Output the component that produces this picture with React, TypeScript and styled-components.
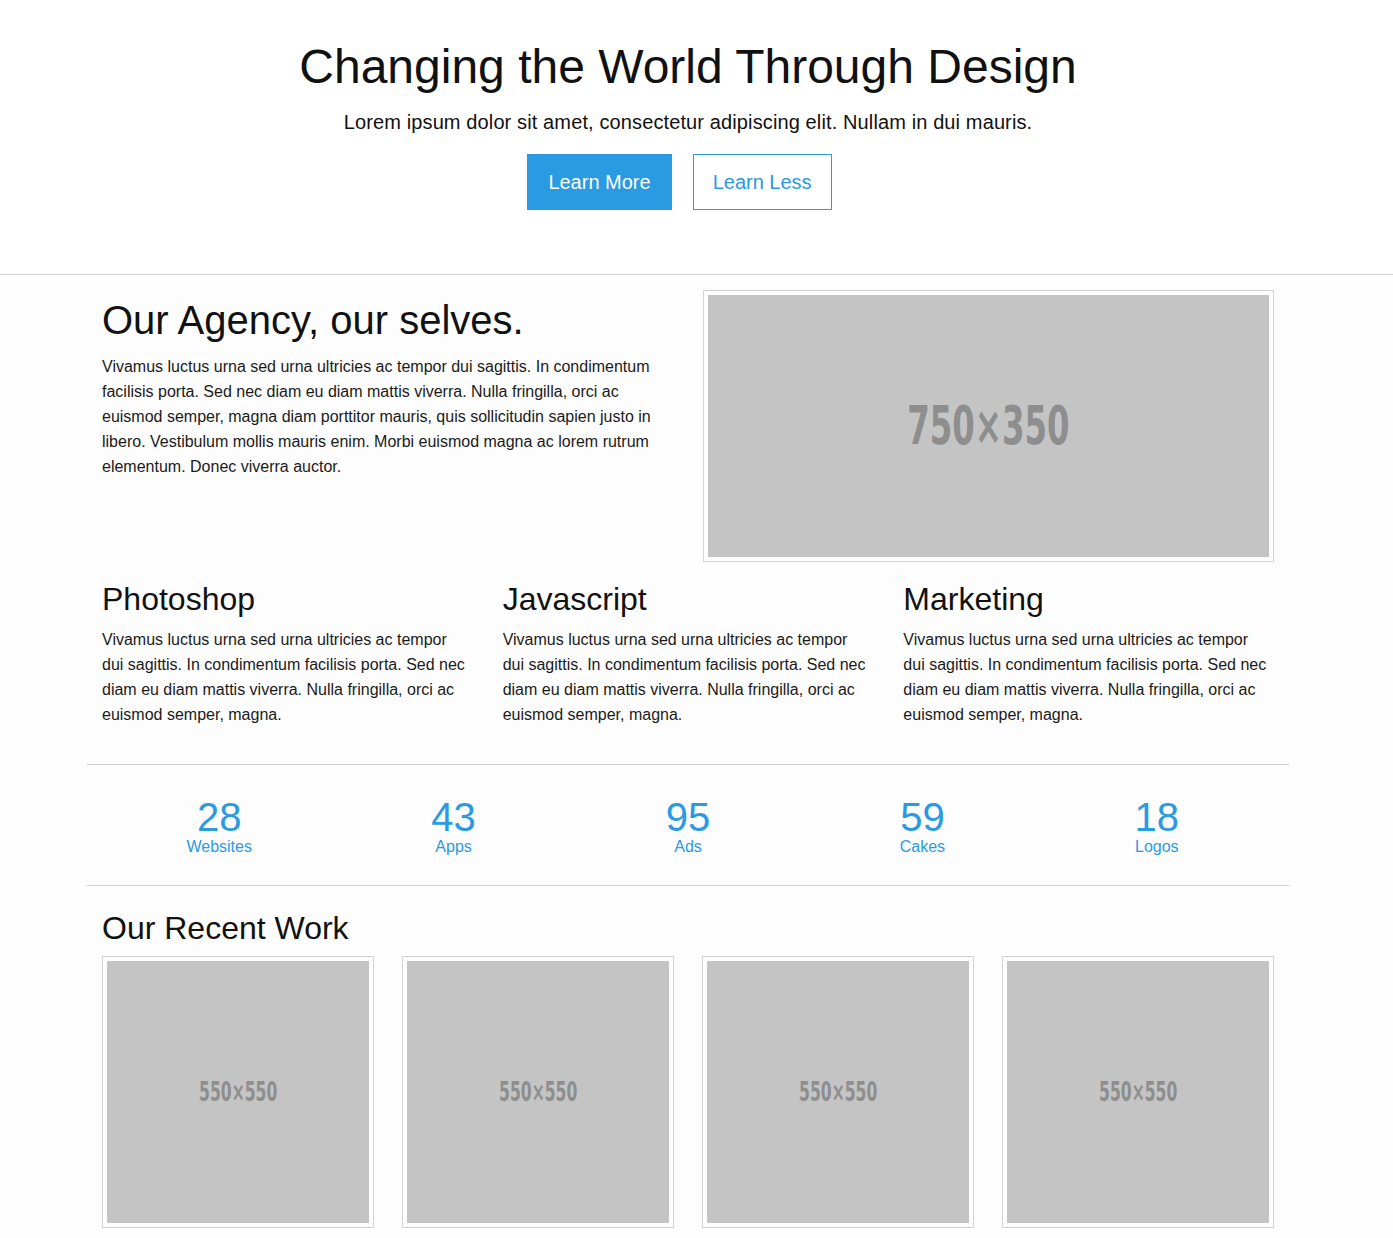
import React from 'react';
import styled, {createGlobalStyle} from 'styled-components';

const GlobalStyle = createGlobalStyle`
    html, body {
        margin: 0;
        padding: 0;
        background: #fdfdfd;
        color: #111;
        font-family: "Liberation Sans", Arial, Helvetica, sans-serif;
    }

    * {
        box-sizing: border-box;
    }
`;

const BLUE = '#2a9ae3';
// the reference was shot with a scrollbar gutter on the right
const GUTTER = 17;

const Hero = styled.header`
    background: #fff;
    border-bottom: 1px solid #cfcfcf;
    padding: 40px ${GUTTER}px 64px 0;
    text-align: center;
`;

const HeroTitle = styled.h1`
    margin: 0;
    font-size: 48px;
    line-height: 53px;
    font-weight: 400;
    color: #111;
`;

const HeroLead = styled.p`
    margin: 17px 0 0;
    font-size: 20px;
    line-height: 24px;
    letter-spacing: 0.12px;
    color: #111;
`;

const ButtonRow = styled.div`
    display: flex;
    justify-content: center;
    gap: 21px;
    margin-top: 20px;
    padding-right: 17px;
`;

const HeroButton = styled.a<{ $outline?: boolean }>`
    display: inline-flex;
    align-items: center;
    justify-content: center;
    height: 56px;
    padding: 0 ${p => (p.$outline ? 19 : 20)}px;
    font-size: 20px;
    text-decoration: none;
    border: 1px solid ${BLUE};
    background: ${p => (p.$outline ? '#fff' : BLUE)};
    color: ${p => (p.$outline ? BLUE : '#fff')};
    cursor: pointer;
`;

const Main = styled.main`
    padding-right: ${GUTTER}px;
`;

const Container = styled.div`
    width: 1202px;
    margin: 0 auto;
`;

const Row = styled.div<{ $cols: number }>`
    display: grid;
    grid-template-columns: repeat(${p => p.$cols}, 1fr);
    padding: 0 15px;
    column-gap: 30px;
`;

const AgencyRow = styled(Row)`
    padding-top: 15px;
`;

const AgencyText = styled.div`
    padding-top: 6px;
`;

const BigHeading = styled.h2`
    margin: 0 0 10px;
    font-size: 40px;
    line-height: 48px;
    font-weight: 400;
`;

const Heading = styled.h3`
    margin: 0 0 9px;
    font-size: 32px;
    line-height: 38px;
    font-weight: 400;
`;

const Body = styled.p`
    margin: 0;
    font-size: 16px;
    line-height: 25px;
    color: #1a1a1a;
`;

const FeatureText = styled(Body)`
    padding-right: 2px;
`;

const Frame = styled.div`
    border: 1px solid #d4d4d4;
    background: #fff;
    padding: 4px;
`;

const Placeholder = styled.div<{ $ratio: string; $size: number; $squeeze: number }>`
    aspect-ratio: ${p => p.$ratio};
    background: #c4c4c4;
    display: flex;
    align-items: center;
    justify-content: center;
    color: #8e8e8e;
    font-family: "DejaVu Sans", "Liberation Sans", sans-serif;
    font-weight: 700;
    font-size: ${p => p.$size}px;
    overflow: hidden;

    span {
        display: inline-block;
        transform: scaleX(${p => p.$squeeze});
    }
`;

const FeatureRow = styled(Row)`
    padding-top: 18px;
    padding-bottom: 37px;
    border-bottom: 1px solid #cfcfcf;
`;

const Stats = styled.section`
    display: grid;
    grid-template-columns: repeat(5, 1fr);
    padding: 32px 15px 28px;
    border-bottom: 1px solid #cfcfcf;
`;

const Stat = styled.div`
    text-align: center;
    color: ${BLUE};
`;

const StatNumber = styled.div`
    font-size: 40px;
    line-height: 40px;
`;

const StatLabel = styled.div`
    font-size: 16px;
    line-height: 20px;
`;

const WorkSection = styled.section`
    padding: 23px 15px 0;
`;

const WorkGrid = styled.div`
    display: grid;
    grid-template-columns: repeat(4, 1fr);
    gap: 28px;
    margin-top: 9px;
`;

const lorem = 'Vivamus luctus urna sed urna ultricies ac tempor dui sagittis. In condimentum facilisis porta. Sed nec diam eu diam mattis viverra. Nulla fringilla, orci ac euismod semper, magna.';

const features = ['Photoshop', 'Javascript', 'Marketing'];

const stats = [
    {n: 28, label: 'Websites'},
    {n: 43, label: 'Apps'},
    {n: 95, label: 'Ads'},
    {n: 59, label: 'Cakes'},
    {n: 18, label: 'Logos'},
];

const App = () => {
    return (
        <>
            <GlobalStyle/>
            <Hero>
                <HeroTitle>Changing the World Through Design</HeroTitle>
                <HeroLead>Lorem ipsum dolor sit amet, consectetur adipiscing elit. Nullam in dui mauris.</HeroLead>
                <ButtonRow>
                    <HeroButton>Learn More</HeroButton>
                    <HeroButton $outline>Learn Less</HeroButton>
                </ButtonRow>
            </Hero>
            <Main>
                <Container>
                    <AgencyRow $cols={2}>
                        <AgencyText>
                            <BigHeading>Our Agency, our selves.</BigHeading>
                            <Body>
                                Vivamus luctus urna sed urna ultricies ac tempor dui sagittis. In condimentum facilisis
                                porta. Sed nec diam eu diam mattis viverra. Nulla fringilla, orci ac euismod semper, magna
                                diam porttitor mauris, quis sollicitudin sapien justo in libero. Vestibulum mollis mauris
                                enim. Morbi euismod magna ac lorem rutrum elementum. Donec viverra auctor.
                            </Body>
                        </AgencyText>
                        <Frame>
                            <Placeholder $ratio="750 / 350" $size={54} $squeeze={0.6}><span>750×350</span></Placeholder>
                        </Frame>
                    </AgencyRow>
                    <FeatureRow $cols={3}>
                        {features.map(f => (
                            <div key={f}>
                                <Heading>{f}</Heading>
                                <FeatureText>{lorem}</FeatureText>
                            </div>
                        ))}
                    </FeatureRow>
                    <Stats>
                        {stats.map(s => (
                            <Stat key={s.label}>
                                <StatNumber>{s.n}</StatNumber>
                                <StatLabel>{s.label}</StatLabel>
                            </Stat>
                        ))}
                    </Stats>
                    <WorkSection>
                        <Heading>Our Recent Work</Heading>
                        <WorkGrid>
                            {[1, 2, 3, 4].map(i => (
                                <Frame key={i}>
                                    <Placeholder $ratio="1 / 1" $size={26} $squeeze={0.6}><span>550×550</span></Placeholder>
                                </Frame>
                            ))}
                        </WorkGrid>
                    </WorkSection>
                </Container>
            </Main>
        </>
    );
};

export default App;
